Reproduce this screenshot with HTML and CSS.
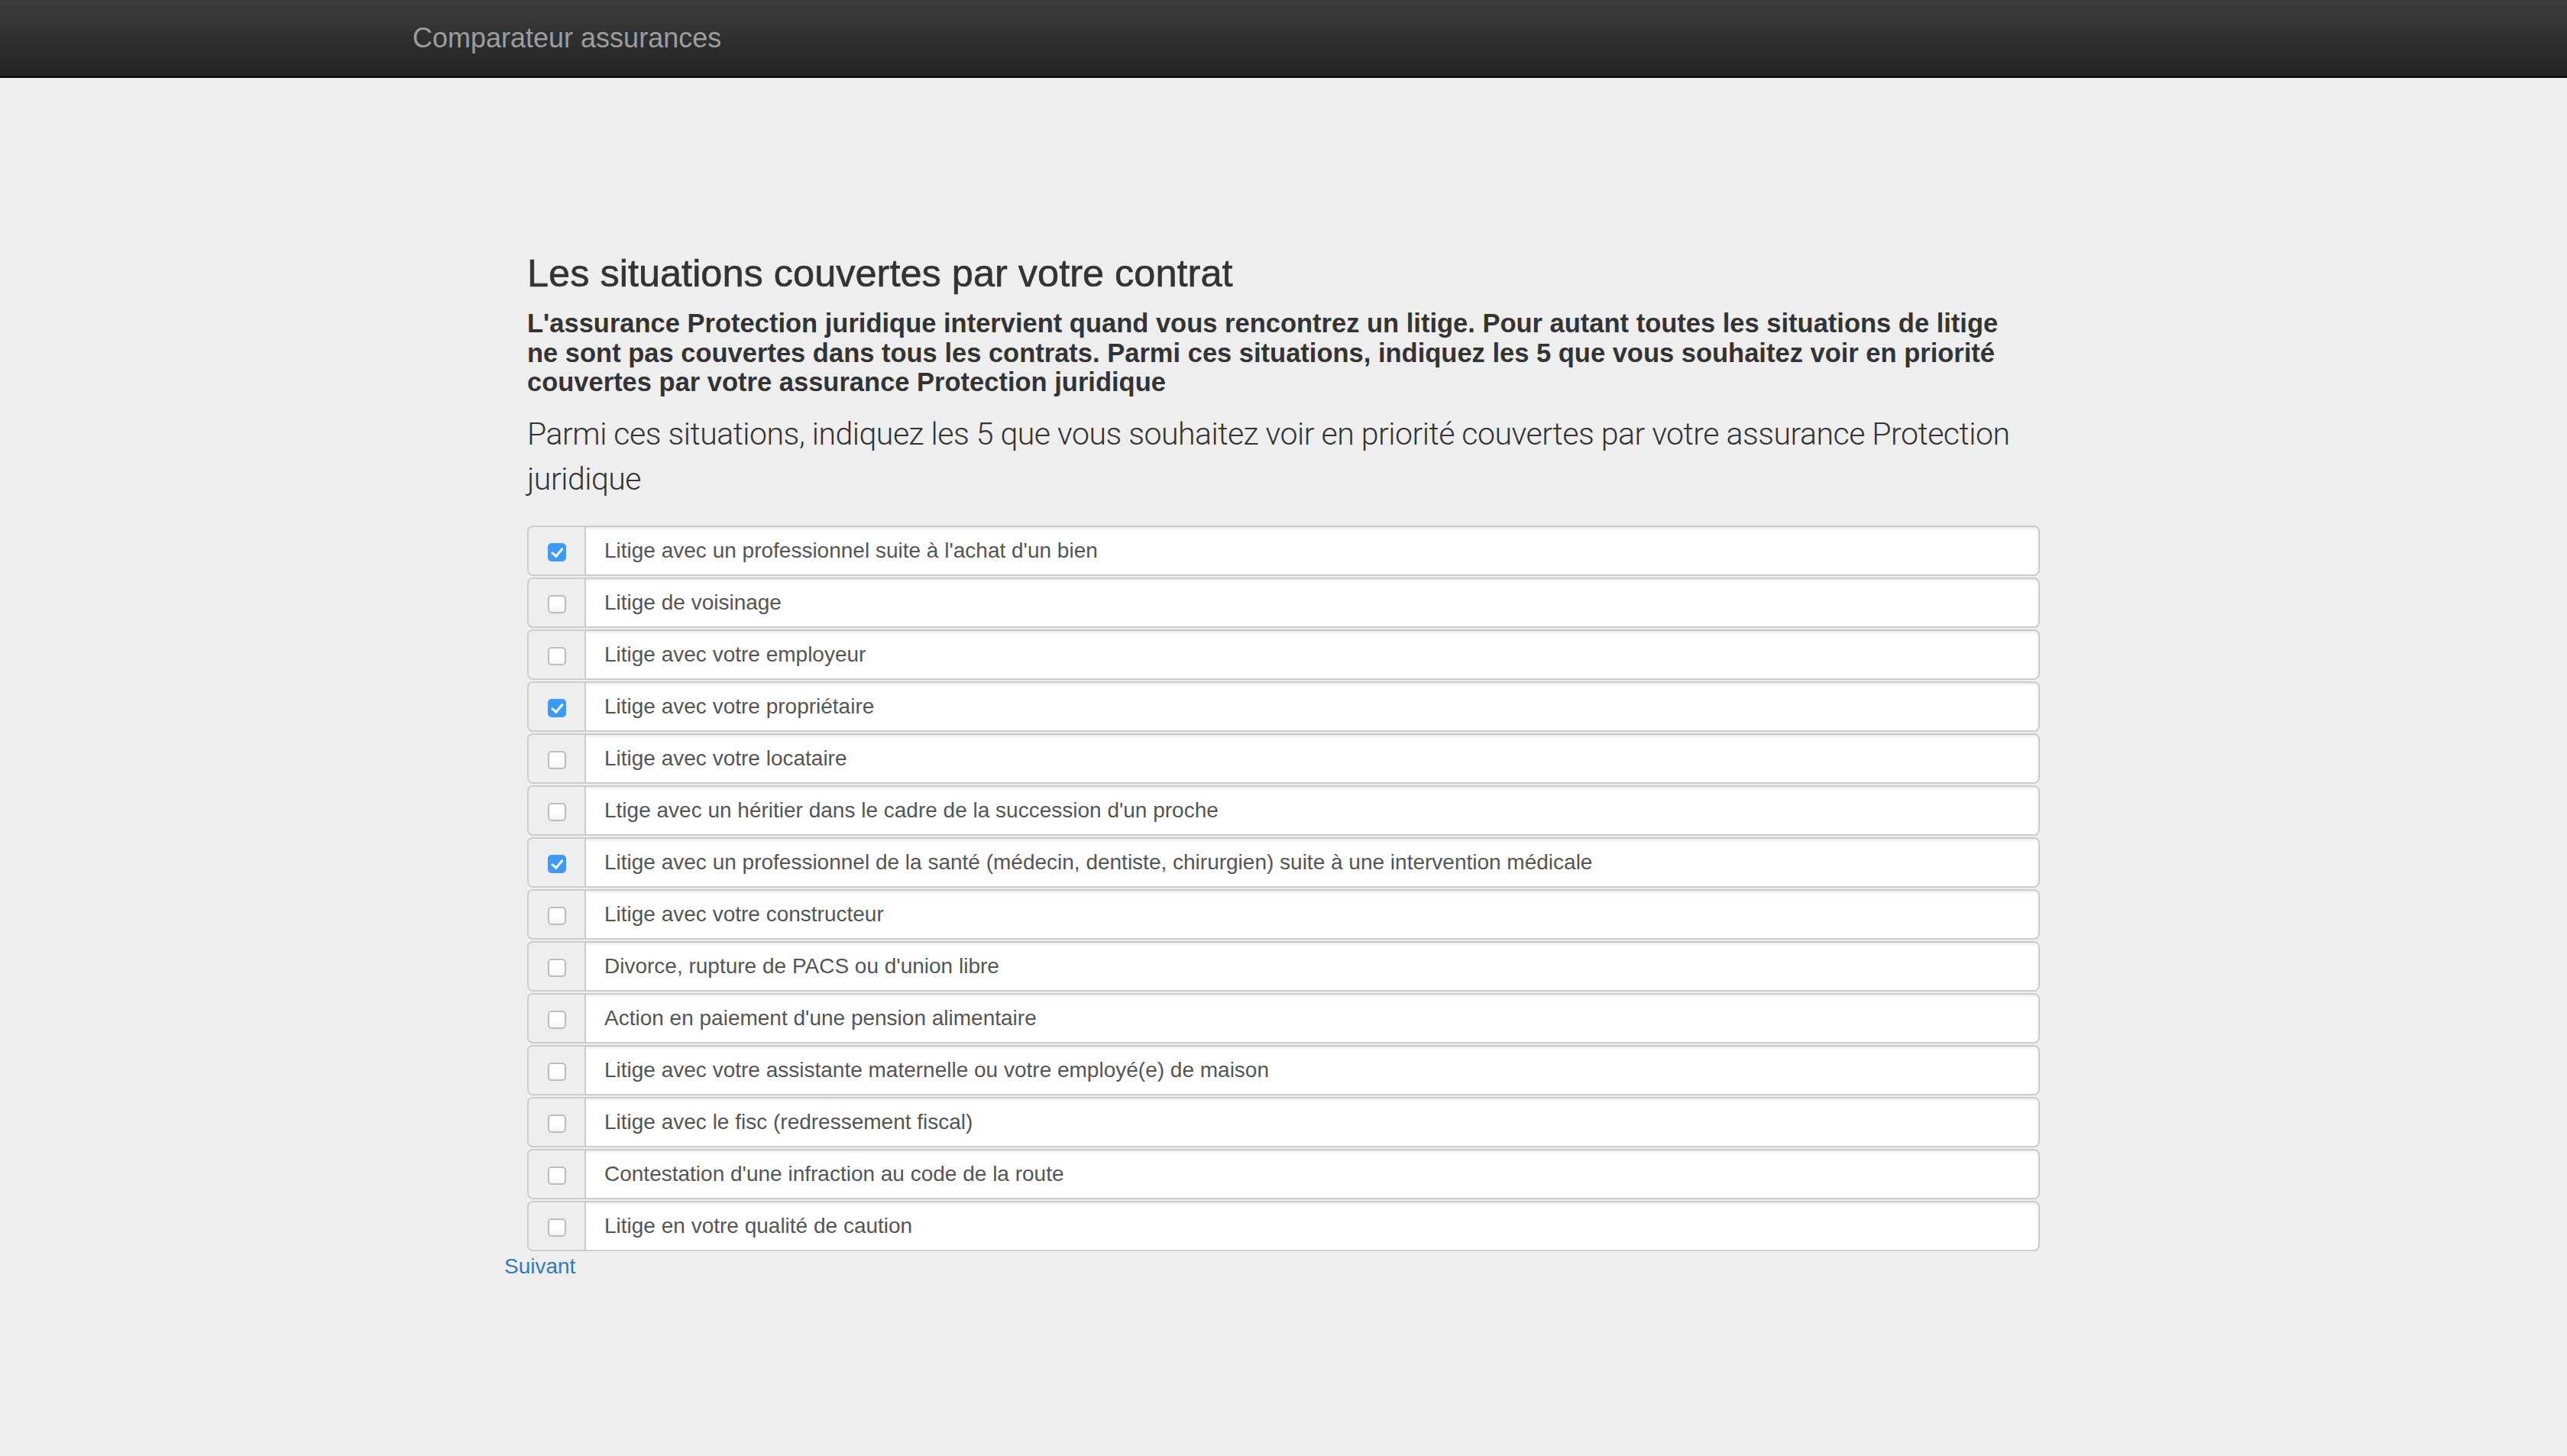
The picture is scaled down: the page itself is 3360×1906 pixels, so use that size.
FILE: index.html
```html
<!DOCTYPE html>
<html lang="fr">
<head>
<meta charset="utf-8">
<title>Comparateur assurances</title>
<link rel="stylesheet" href="styles.css">
</head>
<body>
<nav class="navbar">
  <div class="navbar-inner">
    <a class="brand" href="#">Comparateur assurances</a>
  </div>
</nav>
<main class="page">
  <form class="survey">
    <div class="intro">
      <h3 class="title">Les situations couvertes par votre contrat</h3>
      <p class="question">L'assurance Protection juridique intervient quand vous rencontrez un litige. Pour autant toutes les situations de litige ne sont pas couvertes dans tous les contrats. Parmi ces situations, indiquez les 5 que vous souhaitez voir en priorité couvertes par votre assurance Protection juridique</p>
      <p class="lead">Parmi ces situations, indiquez les 5 que vous souhaitez voir en priorité couvertes par votre assurance Protection juridique</p>
    </div>
    <div class="options">
      <label class="option"><span class="addon"><input type="checkbox" checked></span><span class="option-text">Litige avec un professionnel suite à l'achat d'un bien</span></label>
      <label class="option"><span class="addon"><input type="checkbox"></span><span class="option-text">Litige de voisinage</span></label>
      <label class="option"><span class="addon"><input type="checkbox"></span><span class="option-text">Litige avec votre employeur</span></label>
      <label class="option"><span class="addon"><input type="checkbox" checked></span><span class="option-text">Litige avec votre propriétaire</span></label>
      <label class="option"><span class="addon"><input type="checkbox"></span><span class="option-text">Litige avec votre locataire</span></label>
      <label class="option"><span class="addon"><input type="checkbox"></span><span class="option-text">Ltige avec un héritier dans le cadre de la succession d'un proche</span></label>
      <label class="option"><span class="addon"><input type="checkbox" checked></span><span class="option-text">Litige avec un professionnel de la santé (médecin, dentiste, chirurgien) suite à une intervention médicale</span></label>
      <label class="option"><span class="addon"><input type="checkbox"></span><span class="option-text">Litige avec votre constructeur</span></label>
      <label class="option"><span class="addon"><input type="checkbox"></span><span class="option-text">Divorce, rupture de PACS ou d'union libre</span></label>
      <label class="option"><span class="addon"><input type="checkbox"></span><span class="option-text">Action en paiement d'une pension alimentaire</span></label>
      <label class="option"><span class="addon"><input type="checkbox"></span><span class="option-text">Litige avec votre assistante maternelle ou votre employé(e) de maison</span></label>
      <label class="option"><span class="addon"><input type="checkbox"></span><span class="option-text">Litige avec le fisc (redressement fiscal)</span></label>
      <label class="option"><span class="addon"><input type="checkbox"></span><span class="option-text">Contestation d'une infraction au code de la route</span></label>
      <label class="option"><span class="addon"><input type="checkbox"></span><span class="option-text">Litige en votre qualité de caution</span></label>
    </div>
    <a class="next" href="#">Suivant</a>
  </form>
</main>
</body>
</html>
```

FILE: styles.css
```css
html, body {
  margin: 0;
  padding: 0;
}

body {
  background: #eeeeee;
  font-family: "Liberation Sans", Arial, sans-serif;
  color: #333333;
  min-height: 1906px;
}

.navbar {
  height: 100px;
  background: linear-gradient(to bottom, #3c3c3c 0%, #222222 100%);
  border-bottom: 2px solid #080808;
}

.navbar-inner {
  width: 2280px;
  margin: 0 auto;
}

.brand {
  display: inline-block;
  font-size: 36px;
  line-height: 100px;
  color: #9d9d9d;
  text-decoration: none;
}

.page {
  padding-top: 228px;
}

.survey {
  width: 2040px;
  margin: 0 auto;
}

.intro {
  padding: 0 30px;
}

.title {
  margin: 0;
  font-size: 50.5px;
  font-weight: 400;
  line-height: 55px;
  color: #333333;
  -webkit-text-stroke: 0.6px #333333;
}

.question {
  margin: 19px 0 0;
  padding-right: 24px;
  font-size: 34.5px;
  font-weight: 700;
  line-height: 38.5px;
  color: #333333;
}

.lead {
  margin: 19.5px 0 0;
  font-family: Roboto, "Liberation Sans", sans-serif;
  font-weight: 300;
  font-size: 41px;
  letter-spacing: -0.5px;
  line-height: 58.8px;
  color: #333333;
}

.options {
  margin-top: 31px;
  padding: 0 30px;
  display: flex;
  flex-direction: column;
  gap: 2px;
}

.option {
  display: flex;
  height: 66px;
  box-sizing: border-box;
  border: 2px solid #cccccc;
  border-radius: 8px;
  overflow: hidden;
  background: #ffffff;
}

.addon {
  width: 73px;
  flex: none;
  display: flex;
  align-items: center;
  justify-content: center;
  background: #eeeeee;
  border-right: 2px solid #cccccc;
}

.addon input {
  -webkit-appearance: none;
  appearance: none;
  width: 24px;
  height: 24px;
  margin: 4px 0 0;
  box-sizing: border-box;
  border: 2px solid #bdbdbd;
  border-radius: 5px;
  background: linear-gradient(to bottom, #ffffff 0%, #ffffff 60%, #f3f3f3 100%);
  position: relative;
}

.addon input:checked {
  border: none;
  background: #3b99fc;
}

.addon input:checked::after {
  content: "";
  position: absolute;
  left: 8px;
  top: 3px;
  width: 6px;
  height: 12px;
  border-right: 3px solid #ffffff;
  border-bottom: 3px solid #ffffff;
  transform: rotate(40deg);
}

.option-text {
  flex: 1;
  padding-left: 24px;
  font-size: 28px;
  line-height: 62px;
  color: #555555;
  box-shadow: inset 0 2px 2px rgba(0, 0, 0, 0.075);
}

.next {
  display: inline-block;
  font-size: 28px;
  line-height: 40px;
  color: #337ab7;
  text-decoration: none;
}
```
